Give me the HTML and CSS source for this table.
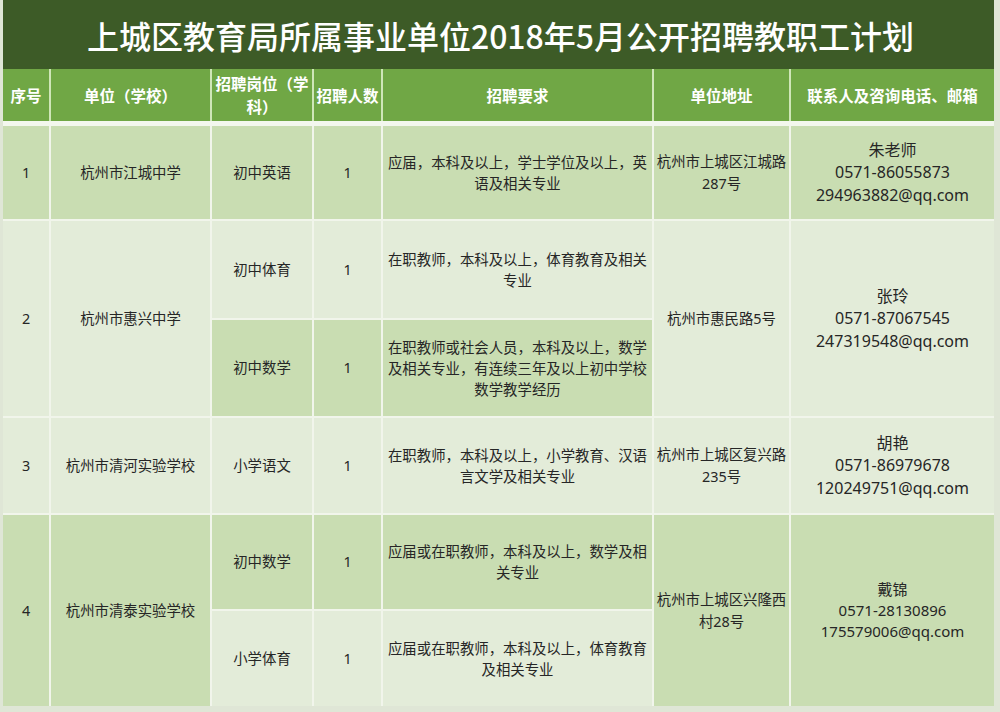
FILE: index.html
```html
<!DOCTYPE html>
<html lang="zh-CN">
<head>
<meta charset="utf-8">
<title>上城区教育局所属事业单位2018年5月公开招聘教职工计划</title>
<link rel="stylesheet" href="styles.css">
</head>
<body>
<div class="sheet">
  <div class="title">上城区教育局所属事业单位2018年5月公开招聘教职工计划</div>
  <div class="head grid">
    <div class="hc">序号</div>
    <div class="hc">单位（学校）</div>
    <div class="hc">招聘岗位（学科）</div>
    <div class="hc">招聘人数</div>
    <div class="hc">招聘要求</div>
    <div class="hc">单位地址</div>
    <div class="hc">联系人及咨询电话、邮箱</div>
  </div>
  <div class="body grid">
    <!-- row 1 -->
    <div class="c dk">1</div>
    <div class="c dk">杭州市江城中学</div>
    <div class="c dk">初中英语</div>
    <div class="c dk">1</div>
    <div class="c dk req">应届，本科及以上，学士学位及以上，英语及相关专业</div>
    <div class="c dk addr">杭州市上城区江城路287号</div>
    <div class="c dk contact">朱老师<br>0571-86055873<br>294963882@qq.com</div>
    <!-- row 2 -->
    <div class="c lt span2">2</div>
    <div class="c lt span2">杭州市惠兴中学</div>
    <div class="c lt">初中体育</div>
    <div class="c lt">1</div>
    <div class="c lt req">在职教师，本科及以上，体育教育及相关专业</div>
    <div class="c lt addr span2">杭州市惠民路5号</div>
    <div class="c lt contact span2">张玲<br>0571-87067545<br>247319548@qq.com</div>
    <div class="c dk">初中数学</div>
    <div class="c dk">1</div>
    <div class="c dk req">在职教师或社会人员，本科及以上，数学及相关专业，有连续三年及以上初中学校数学教学经历</div>
    <!-- row 3 -->
    <div class="c lt">3</div>
    <div class="c lt">杭州市清河实验学校</div>
    <div class="c lt">小学语文</div>
    <div class="c lt">1</div>
    <div class="c lt req">在职教师，本科及以上，小学教育、汉语言文学及相关专业</div>
    <div class="c lt addr">杭州市上城区复兴路235号</div>
    <div class="c lt contact">胡艳<br>0571-86979678<br>120249751@qq.com</div>
    <!-- row 4 -->
    <div class="c dk span2">4</div>
    <div class="c dk span2">杭州市清泰实验学校</div>
    <div class="c dk">初中数学</div>
    <div class="c dk">1</div>
    <div class="c dk req">应届或在职教师，本科及以上，数学及相关专业</div>
    <div class="c dk addr span2">杭州市上城区兴隆西村28号</div>
    <div class="c dk contact small span2">戴锦<br>0571-28130896<br>175579006@qq.com</div>
    <div class="c lt">小学体育</div>
    <div class="c lt">1</div>
    <div class="c lt req">应届或在职教师，本科及以上，体育教育及相关专业</div>
  </div>
</div>
</body>
</html>
```
FILE: styles.css
```css
* { box-sizing: border-box; }
html, body {
  margin: 0;
  padding: 0;
}
body {
  width: 1000px;
  height: 712px;
  overflow: hidden;
  background: #dfe6d6;
  font-family: "Noto Sans", "Noto Sans CJK SC", sans-serif;
  color: #262626;
}
.sheet {
  margin-left: 3px;
  width: 991px;
}
.title {
  height: 70px;
  background: #3d5b27;
  color: #ffffff;
  font-family: "Noto Sans CJK SC", sans-serif;
  font-size: 32px;
  font-weight: 500;
  display: flex;
  align-items: center;
  justify-content: center;
  padding-left: 4px;
  border-bottom: 1px solid #354f22;
}
.grid {
  display: grid;
  grid-template-columns: 46px 159px 100px 67px 269px 135px 203px;
  column-gap: 2px;
}
.head {
  height: 52px;
  background: #cfe6b8;
  margin-top: -1px;
  border-bottom: 5px solid #f3f7ee;
  box-sizing: content-box;
}
.hc {
  background: #70a745;
  color: #ffffff;
  font-family: "Noto Sans CJK SC", sans-serif;
  font-weight: 700;
  font-size: 15.5px;
  line-height: 23px;
  display: flex;
  align-items: center;
  justify-content: center;
  text-align: center;
  padding: 0 2px;
}
.body {
  background: #f1f5eb;
  row-gap: 2px;
  grid-template-rows: 93px 97px 96px 95px 94px 95px;
}
.c {
  display: flex;
  align-items: center;
  justify-content: center;
  text-align: center;
  font-size: 14.4px;
  line-height: 22px;
  padding: 0 2px;
}
.dk { background: #c9ddb2; }
.lt { background: #e3ecd9; }
.span2 { grid-row: span 2; }
.req {
  padding: 0 4px;
  line-height: 21px;
}
.addr { padding: 0 2px; }
.contact {
  font-size: 16px;
  line-height: 22.5px;
}
.contact.small {
  font-size: 15px;
  line-height: 21px;
}
```
